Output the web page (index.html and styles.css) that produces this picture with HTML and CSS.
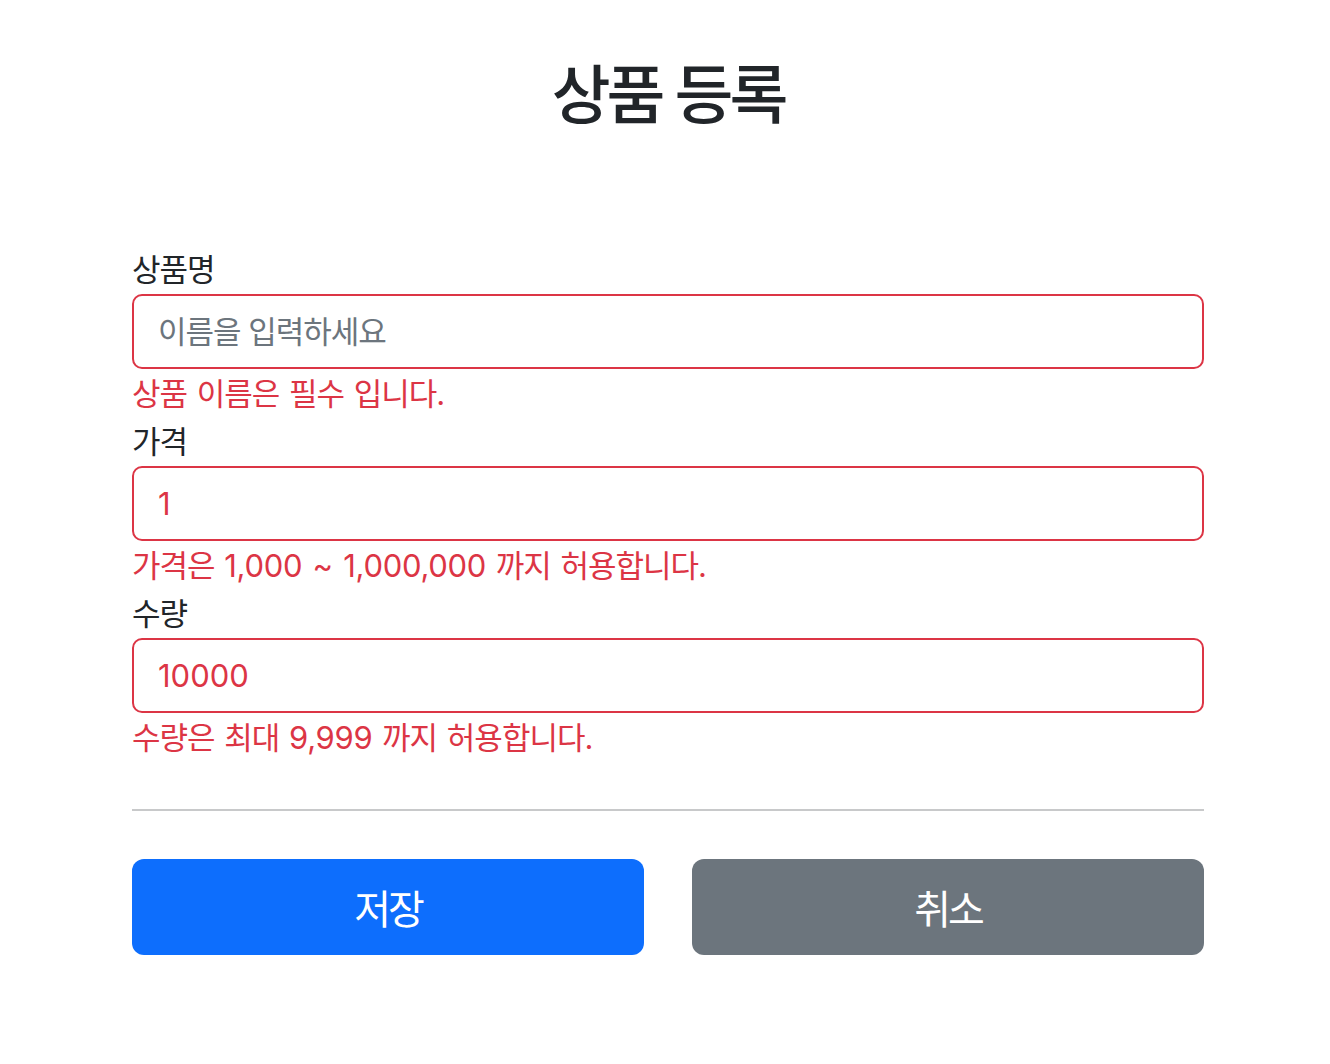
FILE: index.html
```html
<!DOCTYPE html>
<html lang="ko">
<head>
<meta charset="utf-8">
<title>상품 등록</title>
<link rel="stylesheet" href="styles.css">
</head>
<body>
<div class="container">
  <div class="header">
    <h2 class="title">상품 등록</h2>
  </div>
  <form class="form">
    <div class="field">
      <label class="label" for="itemName">상품명</label>
      <input class="input input-error" type="text" id="itemName" placeholder="이름을 입력하세요">
      <div class="error">상품 이름은 필수 입니다.</div>
    </div>
    <div class="field">
      <label class="label" for="price">가격</label>
      <input class="input input-error input-num" type="text" id="price" value="1">
      <div class="error">가격은 <span class="num">1,000 ~ 1,000,000</span> 까지 허용합니다.</div>
    </div>
    <div class="field">
      <label class="label" for="quantity">수량</label>
      <input class="input input-error input-num" type="text" id="quantity" value="10000">
      <div class="error">수량은 최대 <span class="num">9,999</span> 까지 허용합니다.</div>
    </div>
    <hr class="divider">
    <div class="actions">
      <button class="btn btn-primary" type="button">저장</button>
      <button class="btn btn-secondary" type="button">취소</button>
    </div>
  </form>
</div>
</body>
</html>
```
FILE: styles.css
```css
* { box-sizing: border-box; }
html, body { margin: 0; padding: 0; background: #fff; }
body {
  padding-left: 6px;
  font-family: Inter, "Noto Sans CJK KR", sans-serif;
  color: #212529;
}
.container {
  width: 1072px;
  margin: 0 auto;
}
.header {
  padding-top: 56px;
  padding-bottom: 113px;
  text-align: center;
}
.title {
  margin: 0;
  font-size: 64px;
  line-height: 77px;
  font-weight: 500;
  letter-spacing: -4px;
  color: #212529;
}
.form { margin: 0; }
.field { display: flex; flex-direction: column; }
.label {
  display: block;
  height: 48px;
  font-size: 31px;
  line-height: 48px;
  letter-spacing: -1px;
  color: #212529;
}
.input {
  display: block;
  width: 100%;
  height: 75px;
  margin: 0;
  padding: 0 24px;
  font-family: inherit;
  font-size: 31px;
  letter-spacing: -1px;
  color: #212529;
  background: #fff;
  border: 2px solid #ced4da;
  border-radius: 10px;
  outline: none;
}
.input::placeholder { color: #6c757d; opacity: 1; }
.input-error { border-color: #dc3545; color: #dc3545; }
.input-num { letter-spacing: 0; }
.error {
  height: 49px;
  font-size: 31px;
  line-height: 49px;
  letter-spacing: -1px;
  word-spacing: 2px;
  color: #dc3545;
}
.num { letter-spacing: -0.3px; }
.divider {
  margin: 47px 0 48px;
  border: 0;
  border-top: 2px solid #c8c9ca;
  height: 0;
}
.actions {
  display: grid;
  grid-template-columns: 1fr 1fr;
  gap: 48px;
}
.btn {
  height: 96px;
  border: 0;
  border-radius: 12px;
  font-family: inherit;
  font-size: 40px;
  letter-spacing: -3px;
  color: #fff;
  cursor: pointer;
}
.btn-primary { background: #0d6efd; }
.btn-secondary { background: #6c757d; }
```
